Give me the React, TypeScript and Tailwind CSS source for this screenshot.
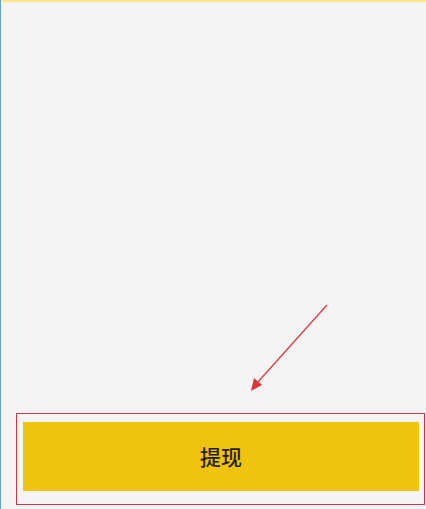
export default function App() {
  return (
    <div className="relative flex h-[509px] w-[426px] flex-col overflow-hidden border-l border-[#5aa7d8] bg-[#f4f4f4] font-['Noto_Sans_CJK_SC',sans-serif]">
      <div className="h-[2px] bg-[#fde58a]" />
      <div className="flex-1 px-[16px] pt-[10px]">
        <div className="h-[3px] border-b border-[#efefef]" />
      </div>
      <div className="mb-[4px] ml-[15px] mr-[1px] border border-[#cc3a40] pb-[13px] pl-[6px] pr-[5px] pt-[8px]">
        <button className="flex h-[69px] w-full items-center justify-center bg-[#f0c30e] text-[21px] font-medium text-[#231d0c]">
          提现
        </button>
      </div>
      <svg className="pointer-events-none absolute left-0 top-0" width="426" height="509">
        <line x1="326" y1="305" x2="256" y2="383" stroke="#e0353a" strokeWidth="1.2" />
        <polygon points="250,391 253,378 261,385" fill="#e0353a" />
      </svg>
    </div>
  );
}
